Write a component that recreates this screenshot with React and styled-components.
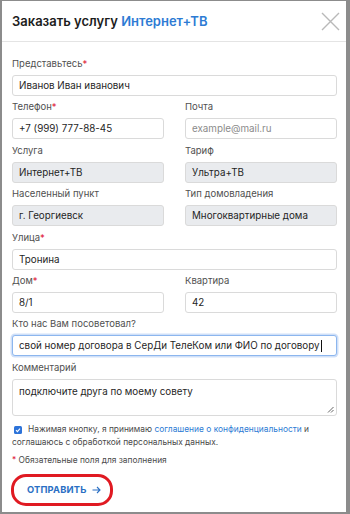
import React from "react";
import styled, { createGlobalStyle } from "styled-components";

const Global = createGlobalStyle`
  html, body { margin: 0; padding: 0; }
  body {
    background: #8c8c8c;
    font-family: Inter, "Noto Sans", "Liberation Sans", sans-serif;
    width: 350px;
    height: 514px;
    overflow: hidden;
  }
  * { box-sizing: border-box; }
`;

const Modal = styled.div`
  margin: 1px 4px 0 2px;
  width: 344px;
  height: 511px;
  background: #fff;
  display: flex;
  flex-direction: column;
`;

const Header = styled.div`
  height: 41px;
  border-bottom: 1px solid #e4e4e4;
  display: flex;
  align-items: center;
  justify-content: space-between;
  padding: 0 6px 0 10px;
`;

const Title = styled.h1`
  margin: 0;
  font-size: 13px;
  font-weight: 600;
  color: #1c1c1c;
  letter-spacing: 0;
`;

const Accent = styled.span`
  color: #2d7bd4;
`;

const Close = styled.button`
  border: 0;
  background: none;
  padding: 0;
  width: 20px;
  height: 20px;
  display: flex;
  align-items: center;
  justify-content: center;
`;

const Body = styled.form`
  padding: 16px 9px 0 10px;
  display: flex;
  flex-direction: column;
`;

const Grid = styled.div`
  display: grid;
  grid-template-columns: 1fr 1fr;
  column-gap: 21px;
  row-gap: 5.4px;
`;

const Field = styled.div`
  grid-column: ${(p) => (p.$full ? "1 / -1" : "auto")};
  display: flex;
  flex-direction: column;
`;

const Label = styled.label`
  font-size: 9.5px;
  line-height: 12px;
  height: 12px;
  margin-bottom: 5px;
  color: #505050;
`;

const Req = styled.span`
  color: #e0203a;
`;

const Input = styled.div`
  height: 21px;
  border: 1px solid ${(p) => (p.$focus ? "#8cb6ee" : "#dadada")};
  box-shadow: ${(p) => (p.$focus ? "0 0 0 1.5px rgba(120,165,235,0.35)" : "none")};
  border-radius: 3px;
  background: ${(p) => (p.$disabled ? "#e9ebee" : "#fff")};
  padding: 0 6px;
  display: flex;
  align-items: center;
  font-size: 9.8px;
  color: ${(p) => (p.$placeholder ? "#8a8a8a" : "#1f1f1f")};
  white-space: nowrap;
  overflow: hidden;
`;

const Caret = styled.span`
  display: inline-block;
  width: 1px;
  height: 12px;
  background: #111;
  margin-left: 1px;
`;

const TextArea = styled.div`
  position: relative;
  height: 37px;
  border: 1px solid #dadada;
  border-radius: 3px;
  padding: 6px 6px;
  font-size: 9.8px;
  color: #1f1f1f;
`;

const Resize = styled.svg`
  position: absolute;
  right: 2px;
  bottom: 2px;
`;

const Agree = styled.p`
  margin: 7px 0 0;
  font-size: 8.4px;
  line-height: 13px;
  color: #4a4a4a;
`;

const Check = styled.span`
  display: inline-flex;
  vertical-align: -1px;
  width: 8px;
  height: 8px;
  border-radius: 1.5px;
  background: #2d73d9;
  margin: 0 6px 0 2px;
  align-items: center;
  justify-content: center;
`;

const Link = styled.a`
  color: #2d7bd4;
  text-decoration: none;
`;

const Note = styled.p`
  margin: 6px 0 0;
  font-size: 8.4px;
  color: #4a4a4a;
`;

const Submit = styled.button`
  margin-top: 9px;
  align-self: flex-start;
  width: 102px;
  height: 32px;
  margin-left: -1px;
  border: 3px solid #e01a22;
  border-radius: 15px;
  background: #fff;
  color: #2a6fc4;
  font-family: Inter, "Noto Sans", sans-serif;
  font-weight: 700;
  font-size: 9.3px;
  letter-spacing: 0.2px;
  display: flex;
  align-items: center;
  gap: 5px;
  padding: 0 0 0 13px;
`;

function Req2() {
  return <Req>*</Req>;
}

export default function App() {
  return (
    <>
      <Global />
      <Modal>
        <Header>
          <Title>
            Заказать услугу <Accent>Интернет+ТВ</Accent>
          </Title>
          <Close type="button" aria-label="Закрыть">
            <svg width="19" height="19" viewBox="0 0 19 19">
              <path d="M1 1L18 18M18 1L1 18" stroke="#b9b9b9" strokeWidth="1.4" />
            </svg>
          </Close>
        </Header>
        <Body>
          <Grid>
            <Field $full>
              <Label>Представьтесь<Req2 /></Label>
              <Input>Иванов Иван иванович</Input>
            </Field>
            <Field>
              <Label>Телефон<Req2 /></Label>
              <Input>+7 (999) 777-88-45</Input>
            </Field>
            <Field>
              <Label>Почта</Label>
              <Input $placeholder>example@mail.ru</Input>
            </Field>
            <Field>
              <Label>Услуга</Label>
              <Input $disabled>Интернет+ТВ</Input>
            </Field>
            <Field>
              <Label>Тариф</Label>
              <Input $disabled>Ультра+ТВ</Input>
            </Field>
            <Field>
              <Label>Населенный пункт</Label>
              <Input $disabled>г. Георгиевск</Input>
            </Field>
            <Field>
              <Label>Тип домовладения</Label>
              <Input $disabled>Многоквартирные дома</Input>
            </Field>
            <Field $full>
              <Label>Улица<Req2 /></Label>
              <Input>Тронина</Input>
            </Field>
            <Field>
              <Label>Дом<Req2 /></Label>
              <Input>8/1</Input>
            </Field>
            <Field>
              <Label>Квартира</Label>
              <Input>42</Input>
            </Field>
            <Field $full>
              <Label>Кто нас Вам посоветовал?</Label>
              <Input $focus>
                свой номер договора в СерДи ТелеКом или ФИО по договору<Caret />
              </Input>
            </Field>
            <Field $full>
              <Label>Комментарий</Label>
              <TextArea>
                подключите друга по моему совету
                <Resize width="7" height="7" viewBox="0 0 7 7">
                  <path d="M6.5 1L1 6.5M6.5 4L4 6.5" stroke="#555" strokeWidth="0.9" />
                </Resize>
              </TextArea>
            </Field>
          </Grid>
          <Agree>
            <Check>
              <svg width="6" height="6" viewBox="0 0 6 6">
                <path d="M1 3.2L2.4 4.6L5 1.6" stroke="#fff" strokeWidth="1.1" fill="none" />
              </svg>
            </Check>
            <span>Нажимая кнопку, я принимаю </span>
            <Link>соглашение о конфиденциальности</Link>
            <span> и</span>
            <br />
            <span>соглашаюсь с обработкой персональных данных.</span>
          </Agree>
          <Note>
            <Req>*</Req> Обязательные поля для заполнения
          </Note>
          <Submit type="button">
            ОТПРАВИТЬ
            <svg width="9" height="8" viewBox="0 0 9 8">
              <path d="M0.5 4H8M5 1L8 4L5 7" stroke="#2a6fc4" strokeWidth="1.1" fill="none" />
            </svg>
          </Submit>
        </Body>
      </Modal>
    </>
  );
}
